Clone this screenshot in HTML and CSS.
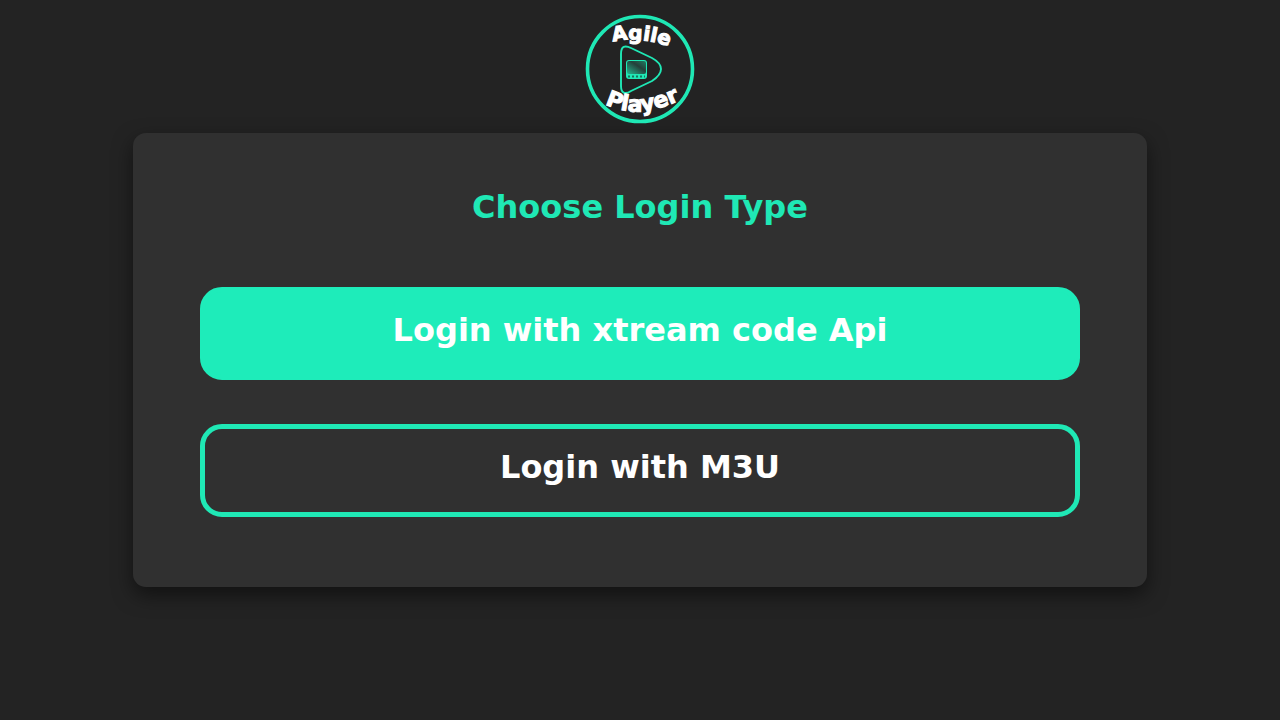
FILE: index.html
```
<!DOCTYPE html>
<html lang="en">
<head>
    <meta charset="UTF-8">
    <meta name="viewport" content="width=device-width, initial-scale=1.0">
    <title>Agile Player</title>
    <link rel="stylesheet" href="styles.css">
</head>
<body>
    <header class="header">
        <svg class="logo" viewBox="0 0 110 110" role="img" aria-label="Agile Player">
            <defs>
                <path id="top-arc" d="M28 28Q54 21 92 35"/>
                <path id="bottom-arc" d="M20 90Q56 109 106 80"/>
                <linearGradient id="screen" x1="1" y1="0" x2="0" y2="1">
                    <stop offset="0" stop-color="#1f7e63"/>
                    <stop offset="0.4" stop-color="#25403a"/>
                    <stop offset="1" stop-color="#22b78e"/>
                </linearGradient>
            </defs>
            <circle class="logo-line" cx="55" cy="55" r="52.5" stroke-width="3.6"/>
            <path class="logo-line" stroke-width="1.9" d="M36 40C36 32 40 31 46 34L67 44Q76 49 76 55Q76 61 67 67L46 77C40 81 36 79 36 72Z"/>
            <!-- tv -->
            <rect class="logo-fill" x="41" y="46" width="21" height="19" rx="3"/>
            <rect x="42" y="47" width="19" height="13" rx="2" fill="url(#screen)"/>
            <path class="logo-keys" d="M43 62.5h2m2 0h2m2 0h2m2 0h2m2 0h1"/>
            <text class="logo-text"><textPath href="#top-arc">Agile</textPath></text>
            <text class="logo-text logo-text-big"><textPath href="#bottom-arc">Player</textPath></text>
        </svg>
    </header>
    <main class="login-box">
        <h1 class="title">Choose Login Type</h1>
        <button type="button" class="btn btn-filled">Login with xtream code Api</button>
        <button type="button" class="btn btn-outline">Login with M3U</button>
    </main>
</body>
</html>
```
FILE: styles.css
```
body {
    margin: 0;
    min-height: 100vh;
    background-color: #232323;
    color: #fff;
    font-family: "DejaVu Sans", Verdana, sans-serif;
}
.header {
    display: flex;
    justify-content: center;
    padding: 14px 0 9px;
}
.logo {
    width: 110px;
    height: 110px;
}
.logo-line {
    fill: none;
    stroke: #1fe8b5;
}
.logo-fill {
    fill: #1fe8b5;
}
.logo-keys {
    fill: none;
    stroke: #17745d;
    stroke-width: 2;
}
.logo-text {
    fill: #fff;
    stroke: #fff;
    stroke-width: 1;
    font-size: 20px;
    font-weight: bold;
}
.logo-text-big {
    font-size: 22px;
}
.login-box {
    display: flex;
    flex-direction: column;
    gap: 44px;
    margin: 0 133px;
    padding: 52px 67px 70px;
    box-sizing: border-box;
    background-color: #303030;
    border-radius: 13px;
    box-shadow: 0 8px 20px rgba(0, 0, 0, 0.5);
}
.title {
    margin: 0 0 14px;
    color: #1fe8b5;
    font-size: 32px;
    line-height: 44px;
    font-weight: bold;
    text-align: center;
}
.btn {
    height: 93px;
    padding: 0 20px 8px;
    border: 5px solid #1fe8b5;
    border-radius: 22px;
    color: #fff;
    font-family: inherit;
    font-size: 32px;
    font-weight: bold;
    cursor: pointer;
}
.btn-filled {
    background-color: #1eecba;
    border-color: #1eecba;
}
.btn-outline {
    background-color: transparent;
}
```
